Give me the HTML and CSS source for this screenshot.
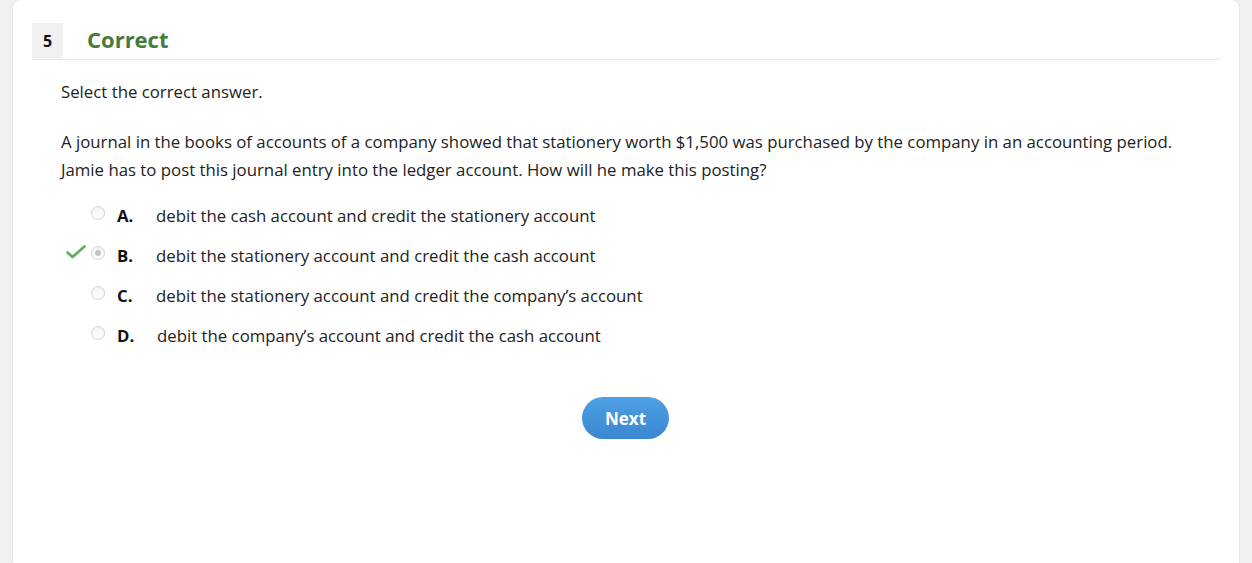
FILE: index.html
```html
<!DOCTYPE html>
<html>
<head>
<meta charset="utf-8">
<link rel="stylesheet" href="styles.css">
</head>
<body>
<div class="card">
  <div class="header">
    <div class="num">5</div>
    <div class="status">Correct</div>
  </div>
  <div class="content">
    <p class="instr">Select the correct answer.</p>
    <p class="question">A journal in the books of accounts of a company showed that stationery worth $1,500 was purchased by the company in an accounting period. Jamie has to post this journal entry into the ledger account. How will he make this posting?</p>
    <ul class="options">
      <li class="opt"><span class="mark"></span><span class="radio"></span><span class="letter">A.</span><span class="text">debit the cash account and credit the stationery account</span></li>
      <li class="opt"><span class="mark"><svg width="20" height="14" viewBox="0 0 20 14"><path d="M1.5 7.5 L6.5 12 L18.5 1.5" fill="none" stroke="#5cae5c" stroke-width="2.6" stroke-linecap="round" stroke-linejoin="round"/></svg></span><span class="radio checked"></span><span class="letter">B.</span><span class="text">debit the stationery account and credit the cash account</span></li>
      <li class="opt"><span class="mark"></span><span class="radio"></span><span class="letter">C.</span><span class="text">debit the stationery account and credit the company’s account</span></li>
      <li class="opt"><span class="mark"></span><span class="radio"></span><span class="letter">D.</span><span class="text d">debit the company’s account and credit the cash account</span></li>
    </ul>
    <div class="actions"><button class="next">Next</button></div>
  </div>
</div>
</body>
</html>
```
FILE: styles.css
```css
html, body {
  margin: 0;
  padding: 0;
  background: #f0f0f0;
  height: 100%;
  overflow: hidden;
}
body {
  font-family: "Open Sans", "Liberation Sans", sans-serif;
  color: #222;
}
.card {
  margin: 0 13px 0 13px;
  background: #fff;
  border-radius: 8px 8px 0 0;
  box-shadow: 0 0 2px rgba(0,0,0,0.12);
  height: 563px;
  padding: 23px 18px 0 19px;
  box-sizing: border-box;
}
.header {
  display: flex;
  align-items: center;
  border-bottom: 1px solid #e8e8e8;
  height: 36px;
}
.num {
  width: 31px;
  height: 35px;
  background: #f0f0f0;
  display: flex;
  align-items: center;
  justify-content: center;
  font-weight: 700;
  font-size: 16px;
  color: #111;
  align-self: flex-start;
}
.status {
  margin-left: 24px;
  font-size: 22px;
  font-weight: 700;
  color: #447a3c;
  margin-top: -5px;
}
.content {
  padding-left: 29px;
}
.instr {
  margin: 18px 0 0;
  font-size: 16.8px;
  line-height: 28px;
}
.question {
  margin: 22px 0 0;
  padding-right: 40px;
  font-size: 16.8px;
  line-height: 28px;
}
.options {
  list-style: none;
  margin: 11px 0 0;
  padding: 0;
}
.opt {
  display: flex;
  align-items: center;
  height: 40px;
  font-size: 16.8px;
}
.mark {
  width: 30px;
  display: flex;
  align-items: center;
  padding-left: 5px;
  box-sizing: border-box;
  margin-top: -6px;
}
.radio {
  width: 14px;
  height: 14px;
  border: 1px solid #d4d4d4;
  border-radius: 50%;
  box-sizing: border-box;
  background: linear-gradient(#f2f2f2, #fff);
  position: relative;
  margin-top: -4px;
}
.radio.checked::after {
  content: "";
  position: absolute;
  left: 3px;
  top: 3px;
  width: 6px;
  height: 6px;
  border-radius: 50%;
  background: #c4c4c4;
}
.letter {
  font-weight: 700;
  margin-left: 12px;
  width: 39px;
  color: #111;
}
.text.d { margin-left: 1px; }
.actions {
  display: flex;
  justify-content: center;
  margin-top: 42px;
  padding-right: 31px;
}
.next {
  width: 87px;
  height: 42px;
  border: none;
  border-radius: 21px;
  background: linear-gradient(#4e9fe3, #3a87d2);
  color: #fff;
  font-family: "Open Sans", "Liberation Sans", sans-serif;
  font-weight: 700;
  font-size: 17px;
  padding: 0;
}
```
